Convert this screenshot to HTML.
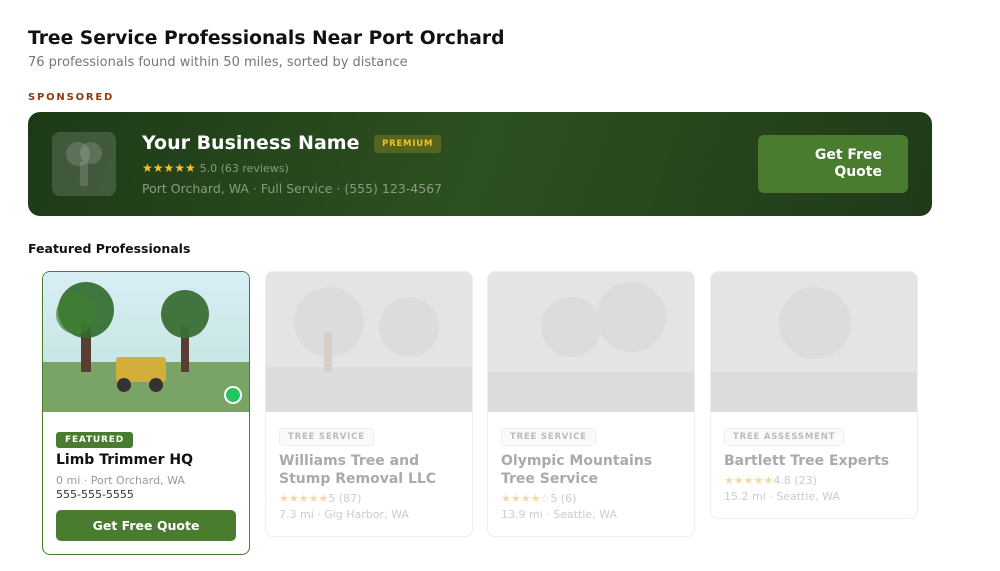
<!DOCTYPE html><html><head><style>
*{box-sizing:border-box;margin:0;padding:0}
body{width:1000px;height:571px;background:#fff;font-family:"DejaVu Sans","Liberation Sans",sans-serif;position:relative;overflow:hidden;color:#111}
.a{position:absolute}
.card{position:absolute;top:271px;width:208px;border:1px solid #eee;border-radius:8px;background:#fff;overflow:hidden}
.card .img{height:140px;position:relative;background:#e4e4e4;overflow:hidden}
.tag{display:inline-block;font-size:8.5px;font-weight:bold;letter-spacing:.8px;padding:3px 8px;border-radius:3px;border:1px solid #eee;color:#bbb;background:#fafafa}
.body{padding:15px 13px 12px}
.nm{font-size:14px;font-weight:bold;color:#aaa;margin-top:6px;line-height:18px}
.st{font-size:11px;color:#f5d9a0;margin-top:4px}
.st span{color:#ccc}
.loc{font-size:11px;color:#ccc;margin-top:3px}
</style></head><body>
<div class="a" style="left:28px;top:28px;font-size:18.7px;font-weight:bold">Tree Service Professionals Near Port Orchard</div>
<div class="a" style="left:28px;top:55px;font-size:13px;color:#777">76 professionals found within 50 miles, sorted by distance</div>
<div class="a" style="left:28px;top:92px;font-size:10px;font-weight:bold;letter-spacing:1.8px;color:#8b3a0f">SPONSORED</div>
<div class="a" style="left:28px;top:112px;width:904px;height:104px;border-radius:12px;background:linear-gradient(110deg,#1d3a18 0%,#2d5020 50%,#1f3a19 100%)">
<div class="a" style="left:24px;top:20px;width:64px;height:64px;border-radius:8px;background:rgba(255,255,255,.15)">
<div class="a" style="left:14px;top:10px;width:24px;height:24px;border-radius:50%;background:rgba(255,255,255,.15)"></div>
<div class="a" style="left:28px;top:10px;width:22px;height:22px;border-radius:50%;background:rgba(255,255,255,.15)"></div>
<div class="a" style="left:28px;top:30px;width:8px;height:24px;border-radius:2px;background:rgba(255,255,255,.15)"></div>
</div>
<div class="a" style="left:114px;top:20px;font-size:19px;font-weight:bold;color:#fff">Your Business Name <span style="display:inline-block;vertical-align:3px;margin-left:8px;font-size:8.5px;letter-spacing:.8px;color:#f0c020;background:rgba(240,192,32,.22);padding:4px 8px;border-radius:3px">PREMIUM</span></div>
<div class="a" style="left:114px;top:49px;font-size:12px;color:#f5c030">★★★★★ <span style="font-size:11px;color:#8a9a80">5.0 (63 reviews)</span></div>
<div class="a" style="left:114px;top:69px;font-size:12.5px;color:#8a9a80">Port Orchard, WA · Full Service · (555) 123-4567</div>
<div class="a" style="left:730px;top:23px;width:150px;height:58px;border-radius:6px;background:#4a7c2f;color:#fff;font-weight:bold;font-size:14px;text-align:right;padding:12px 26px 0 0;line-height:17px">Get Free<br>Quote</div>
</div>
<div class="a" style="left:28px;top:241px;font-size:12.5px;font-weight:bold">Featured Professionals</div>

<div class="card" style="left:42px;height:284px;border-color:#4a7c2f">
<div class="img" style="background:linear-gradient(#d8eef6,#bfe2d8)">
<div class="a" style="left:0;top:90px;width:208px;height:50px;background:#7aa466"></div>
<div class="a" style="left:38px;top:50px;width:10px;height:50px;background:#5a3e34"></div>
<div class="a" style="left:138px;top:55px;width:8px;height:45px;background:#5a3e34"></div>
<div class="a" style="left:15px;top:10px;width:56px;height:56px;border-radius:50%;background:#2f6a2a;opacity:.9"></div>
<div class="a" style="left:13px;top:22px;width:40px;height:40px;border-radius:50%;background:#3f8030;opacity:.7"></div>
<div class="a" style="left:118px;top:18px;width:48px;height:48px;border-radius:50%;background:#3a6e35;opacity:.95"></div>
<div class="a" style="left:73px;top:85px;width:50px;height:25px;border-radius:3px;background:#d4ae3a"></div>
<div class="a" style="left:74px;top:106px;width:14px;height:14px;border-radius:50%;background:#333"></div>
<div class="a" style="left:106px;top:106px;width:14px;height:14px;border-radius:50%;background:#333"></div>
<div class="a" style="left:181px;top:114px;width:18px;height:18px;border-radius:50%;background:#22c55e;border:2px solid #fff"></div>
</div>
<div class="body" style="padding-top:15px">
<span class="tag" style="background:#4a7c2f;color:#fff;border-color:#4a7c2f;padding:2px 8px;font-size:9px">FEATURED</span>
<div class="nm" style="color:#111;margin-top:3px">Limb Trimmer HQ</div>
<div class="loc" style="color:#999;margin-top:5px">0 mi · Port Orchard, WA</div>
<div class="loc" style="color:#333;margin-top:1px">555-555-5555</div>
<div style="margin-top:9px;height:31px;border-radius:5px;background:#4a7c2f;color:#fff;font-weight:bold;font-size:12.5px;text-align:center;line-height:31px">Get Free Quote</div>
</div></div>

<div class="card" style="left:265px;height:266px">
<div class="img"><div class="a" style="left:0;top:95px;width:208px;height:45px;background:#dcdcdc"></div>
<div class="a" style="left:28px;top:15px;width:70px;height:70px;border-radius:50%;background:#dcdcdc"></div>
<div class="a" style="left:113px;top:25px;width:60px;height:60px;border-radius:50%;background:#dcdcdc"></div>
<div class="a" style="left:58px;top:60px;width:8px;height:40px;background:#d6d0cc"></div></div>
<div class="body" style="padding-top:12px"><span class="tag">TREE SERVICE</span><div class="nm">Williams Tree and Stump Removal LLC</div><div class="st">★★★★★<span>5 (87)</span></div><div class="loc">7.3 mi · Gig Harbor, WA</div></div></div>

<div class="card" style="left:487px;height:266px">
<div class="img"><div class="a" style="left:0;top:100px;width:208px;height:40px;background:#dcdcdc"></div>
<div class="a" style="left:53px;top:25px;width:60px;height:60px;border-radius:50%;background:#dcdcdc"></div>
<div class="a" style="left:108px;top:10px;width:70px;height:70px;border-radius:50%;background:#dcdcdc"></div></div>
<div class="body" style="padding-top:12px"><span class="tag">TREE SERVICE</span><div class="nm">Olympic Mountains Tree Service</div><div class="st">★★★★☆<span>5 (6)</span></div><div class="loc">13.9 mi · Seattle, WA</div></div></div>

<div class="card" style="left:710px;height:248px">
<div class="img"><div class="a" style="left:0;top:100px;width:208px;height:40px;background:#dcdcdc"></div>
<div class="a" style="left:68px;top:15px;width:72px;height:72px;border-radius:50%;background:#dcdcdc"></div></div>
<div class="body" style="padding-top:12px"><span class="tag">TREE ASSESSMENT</span><div class="nm">Bartlett Tree Experts</div><div class="st">★★★★★<span>4.8 (23)</span></div><div class="loc">15.2 mi · Seattle, WA</div></div></div>
</body></html>
